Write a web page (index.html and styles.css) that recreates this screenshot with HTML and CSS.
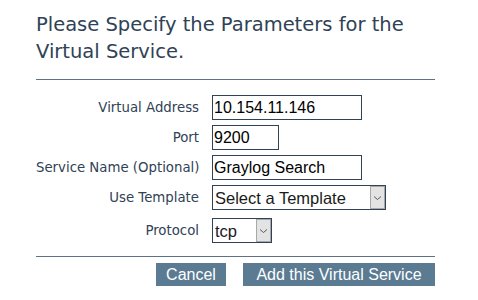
FILE: index.html
```html
<!DOCTYPE html>
<html>
<head>
<meta charset="utf-8">
<link rel="stylesheet" href="styles.css">
</head>
<body>
<div class="panel">
  <h1 class="title">Please Specify the Parameters for the Virtual Service.</h1>
  <div class="rule"></div>
  <form class="form">
    <label class="label" for="va">Virtual Address</label>
    <div class="field"><input id="va" class="input input-wide" type="text" value="10.154.11.146"></div>

    <label class="label" for="port">Port</label>
    <div class="field"><input id="port" class="input input-port" type="text" value="9200"></div>

    <label class="label" for="sn">Service Name (Optional)</label>
    <div class="field"><input id="sn" class="input input-wide" type="text" value="Graylog Search"></div>

    <label class="label" for="tpl">Use Template</label>
    <div class="field">
      <span class="select-wrap select-template">
        <select id="tpl" class="select"><option>Select a Template</option></select>
        <span class="arrow"><svg width="9" height="6" viewBox="0 0 9 6"><path d="M1 1.5 L4.5 4.5 L8 1.5" fill="none" stroke="#5a5a5a" stroke-width="1"/></svg></span>
      </span>
    </div>

    <label class="label label-proto" for="proto">Protocol</label>
    <div class="field field-proto">
      <span class="select-wrap select-proto">
        <select id="proto" class="select"><option>tcp</option></select>
        <span class="arrow"><svg width="9" height="6" viewBox="0 0 9 6"><path d="M1 1.5 L4.5 4.5 L8 1.5" fill="none" stroke="#5a5a5a" stroke-width="1"/></svg></span>
      </span>
    </div>
  </form>
  <div class="rule rule-bottom"></div>
  <div class="actions">
    <button class="btn btn-cancel" type="button">Cancel</button>
    <button class="btn btn-add" type="button">Add this Virtual Service</button>
  </div>
</div>
</body>
</html>
```

FILE: styles.css
```css
html, body {
  margin: 0;
  padding: 0;
  background: #ffffff;
}

.panel {
  margin-left: 36px;
  width: 399px;
  padding-top: 11px;
}

.title {
  margin: 0;
  font-family: "DejaVu Sans", sans-serif;
  font-weight: normal;
  font-size: 19.5px;
  line-height: 27px;
  color: #2f4256;
}

.rule {
  margin-top: 14px;
  height: 0;
  border-top: 1px solid #5f7285;
}

.rule-bottom {
  margin-top: 13px;
}

.form {
  margin: 15px 0 0 0;
  display: grid;
  grid-template-columns: 163px auto;
  column-gap: 13px;
  row-gap: 5px;
  align-items: center;
}

.label {
  text-align: right;
  font-family: "DejaVu Sans", sans-serif;
  font-size: 13.3px;
  color: #2f4256;
  white-space: nowrap;
}

.label-proto,
.field-proto {
  margin-top: 3px;
}

.field {
  display: flex;
  height: 25px;
  align-items: stretch;
}

.input {
  box-sizing: border-box;
  height: 25px;
  margin: 0;
  padding: 0 1px;
  border: 1px solid #2f4256;
  border-radius: 0;
  font-family: "Liberation Sans", Arial, sans-serif;
  font-size: 16px;
  color: #000000;
  background: #ffffff;
  outline: none;
}

.input-wide {
  width: 150px;
}

.input-port {
  width: 67px;
}

.select-wrap {
  position: relative;
  display: block;
  height: 25px;
}

.select-template {
  width: 174px;
}

.select-proto {
  width: 60px;
}

.select {
  box-sizing: border-box;
  width: 100%;
  height: 25px;
  margin: 0;
  padding: 0 0 0 2px;
  border: 1px solid #2f4256;
  border-radius: 0;
  -webkit-appearance: none;
  appearance: none;
  background: #ffffff;
  font-family: "Liberation Sans", Arial, sans-serif;
  font-size: 16.5px;
  color: #1a1a1a;
  outline: none;
}

.arrow {
  position: absolute;
  top: 1px;
  right: 1px;
  bottom: 1px;
  width: 15px;
  box-sizing: border-box;
  border: 1px solid #a8a8a8;
  background: #e3e3e3;
  display: flex;
  align-items: center;
  justify-content: center;
  pointer-events: none;
}

.actions {
  margin-top: 6px;
  display: flex;
  justify-content: flex-end;
  gap: 17px;
}

.btn {
  height: 23px;
  margin: 0;
  padding: 0;
  border: none;
  border-radius: 0;
  background: #5b7b93;
  color: #ffffff;
  font-family: "Liberation Sans", Arial, sans-serif;
  font-size: 16px;
  line-height: 23px;
  text-align: center;
}

.btn-cancel {
  width: 70px;
}

.btn-add {
  width: 192px;
}
```
